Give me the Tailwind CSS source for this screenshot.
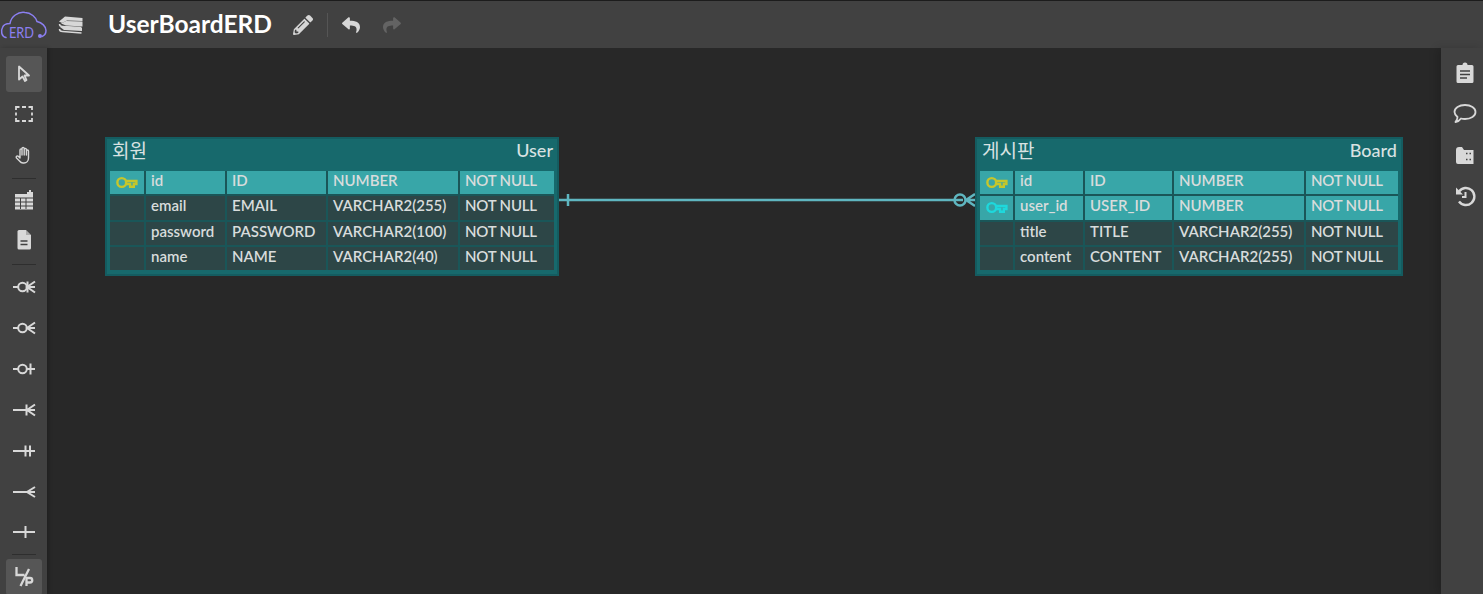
<!DOCTYPE html>
<html lang="en">
<head>
    <meta charset="UTF-8">
    <title>UserBoardERD</title>
    <script src="https://cdn.jsdelivr.net/npm/@tailwindcss/browser@4"></script>
</head>
<body class="h-[594px] w-[1483px] overflow-hidden bg-[#282828] font-['Lato','Noto_Sans_CJK_KR',sans-serif] text-[#d8dcdc]">

    <!-- Top bar -->
    <header class="flex h-[48px] items-center border-t border-[#1c1c1c] bg-[#414141]">
        <svg class="h-[32px] w-[48px]" viewBox="0 0 48 32" fill="none" stroke="#8b7ff0" stroke-width="1.500" stroke-linecap="round">
            <path d="M6 28.500C1.500 27.500 .5 22 2.500 18.500 3.500 15.500 7 14.500 10 14.500 11 7.500 18 2.500 25 3.500 31 3.500 36 8.500 37 12.500 42 13.500 46 17.500 46 21.500 46 24.500 44.500 26.500 42 27.500"/>
            <circle cx="40" cy="27" r="2" fill="#8b7ff0" stroke="none"/>
            <text x="9" y="28.500" font-family="Lato" font-size="15" fill="#8b7ff0" stroke="none" textLength="25" lengthAdjust="spacingAndGlyphs">ERD</text>
        </svg>
        <svg class="ml-[10px] h-[22px] w-[26px]" viewBox="0 0 26 20" fill="none" stroke="#d8d8d8" stroke-width="1.500">
            <path fill="#d8d8d8" stroke="none" d="M1 6.500 7 1.500l17.500 1.500v3L9 5.500 4 8z"/>
            <path d="M1.500 9c0 1.500 1.500 2.500 3 2.500l19 1"/>
            <path fill="#d8d8d8" stroke="none" d="M3 8.500 8 6l16.500.5v5L8 10.500z"/>
            <path d="M1.500 14c0 1.500 1.500 2.500 3 2.500l19 1.500"/>
            <path fill="#d8d8d8" stroke="none" d="M2 12l3-1 19 2v3L6 15z"/>
        </svg>
        <h1 class="ml-[24px] w-[164px] text-[24.500px] font-bold leading-none text-white">UserBoardERD</h1>
        <svg class="ml-[21px] h-[20px] w-[20px]" viewBox="0 0 512 512" fill="#d6d6d6"><path d="M497.900 142.100l-46.100 46.100c-4.700 4.700-12.300 4.700-17 0l-111-111c-4.700-4.700-4.700-12.300 0-17l46.100-46.100c18.700-18.700 49.100-18.700 67.900 0l60.100 60.100c18.800 18.700 18.800 49.100 0 67.900zM284.200 99.800L21.600 362.400.4 483.900c-2.900 16.400 11.400 30.600 27.800 27.800l121.500-21.300 262.600-262.600c4.700-4.700 4.700-12.300 0-17l-111-111c-4.800-4.700-12.400-4.700-17.100 0zM124.100 339.900c-5.500-5.500-5.500-14.300 0-19.800l154-154c5.500-5.500 14.300-5.500 19.800 0s5.500 14.300 0 19.800l-154 154c-5.500 5.500-14.300 5.500-19.800 0zM88 424h48v36.300l-64.500 11.300-31.100-31.100L51.700 376H88v48z"/></svg>
        <div class="ml-[14px] h-[24px] w-px bg-[#555555]"></div>
        <svg class="ml-[14px] h-[20px] w-[18px]" viewBox="0 0 512 512" fill="#d6d6d6"><path d="M8.309 189.836L184.313 37.851C199.719 24.546 224 35.347 224 56.015v80.053c160.629 1.839 288 34.032 288 186.258 0 61.441-39.581 122.309-83.333 154.132-13.653 9.931-33.111-2.533-28.077-18.631 45.344-145.012-21.507-183.510-176.590-185.742V360c0 20.700-24.300 31.453-39.687 18.164l-176.004-152c-11.071-9.562-11.086-26.753 0-36.328z"/></svg>
        <svg class="ml-[23px] h-[20px] w-[18px] -scale-x-100" viewBox="0 0 512 512" fill="#636363"><path d="M8.309 189.836L184.313 37.851C199.719 24.546 224 35.347 224 56.015v80.053c160.629 1.839 288 34.032 288 186.258 0 61.441-39.581 122.309-83.333 154.132-13.653 9.931-33.111-2.533-28.077-18.631 45.344-145.012-21.507-183.510-176.590-185.742V360c0 20.700-24.300 31.453-39.687 18.164l-176.004-152c-11.071-9.562-11.086-26.753 0-36.328z"/></svg>
    </header>

    <div class="relative flex h-[546px]">
        <!-- Left tools -->
        <aside class="relative z-10 flex w-[47px] flex-col items-center bg-[#414141] pt-[8px] shadow-[2px_0_4px_rgba(0,0,0,0.2)] [&>*]:shrink-0">
            <div class="flex h-[36px] w-[36px] items-center justify-center rounded-[3px] bg-[#565656]">
                <svg class="h-[20px] w-[20px]" viewBox="0 0 20 20" fill="none" stroke="#d8d8d8" stroke-width="1.800" stroke-linejoin="round"><path d="M5 2.500v13l3.500-3 2.500 4.500 1.500-1-2-4.500h4.500z"/></svg>
            </div>
            <div class="mt-[4px] flex h-[36px] items-center justify-center">
                <svg class="h-[18px] w-[18px]" viewBox="0 0 18 18" fill="none" stroke="#d8d8d8" stroke-width="1.800"><path d="M1 5V2h3.500M7 2h4M13.500 2H17v3M17 7.500v3M17 13v3h-3.500M11 16H7M4.500 16H1v-3M1 10.500v-3"/></svg>
            </div>
            <div class="mt-[5px] flex h-[36px] items-center justify-center">
                <svg class="h-[20px] w-[20px]" viewBox="0 0 20 20" fill="none" stroke="#d8d8d8" stroke-width="1.400" stroke-linejoin="round" stroke-linecap="round"><path d="M6 13V5c0-1.500 2-1.500 2 0V3.500c0-1.500 2.200-1.500 2.200 0V4.500c0-1.500 2.200-1.500 2.200 0V6c0-1.400 2.100-1.400 2.100 0v7c0 3-2 5-4.500 5H9c-1.500 0-2.500-.7-3.500-2l-3-3c-1-1.200.5-2.700 1.800-1.700L6 13M8 5v5M10.200 4.500V10M12.400 6v4"/></svg>
            </div>
            <div class="mt-[5px] h-px w-[24px] bg-[#2e2e2e]"></div>
            <div class="mt-[2px] flex h-[38px] items-center justify-center">
                <svg class="h-[22px] w-[22px]" viewBox="0 0 22 22" fill="#d8d8d8"><path d="M2 5h12V3h2V1h2v2h2v2h-2v15.500H2z"/><path d="M18 5h2v15.500h-2z"/><path stroke="#414141" stroke-width="1" fill="none" d="M2 9h18M2 13h18M2 17h18M7.500 9v11M13 9v11"/></svg>
            </div>
            <div class="mt-[2px] flex h-[38px] items-center justify-center">
                <svg class="h-[22px] w-[22px]" viewBox="0 0 22 22"><path fill="#d8d8d8" d="M4.500 2.500a1.500 1.500 0 0 1 1.500-1.500h7l5 5v13a1.500 1.500 0 0 1-1.500 1.500h-10.500a1.500 1.500 0 0 1-1.500-1.500z"/><path stroke="#414141" stroke-width="1.500" d="M7.500 12h7M7.500 15.500h7"/><path fill="#414141" d="M13 1v5h5z" opacity=".3"/></svg>
            </div>
            <div class="mt-[5px] h-px w-[24px] bg-[#2e2e2e]"></div>

            <!-- Relationship tools -->
            <div class="mt-[3px] flex h-[38px] items-center justify-center">
                <svg class="h-[14px] w-[24px]" viewBox="0 0 24 14" fill="none" stroke="#d8d8d8" stroke-width="2"><path d="M1 7h5M15 7h8M23 1.500 15 7l8 5.500"/><circle cx="10.500" cy="7" r="4.300"/><path d="M15.500 1.500v11"/></svg>
            </div>
            <div class="mt-[3px] flex h-[38px] items-center justify-center">
                <svg class="h-[14px] w-[24px]" viewBox="0 0 24 14" fill="none" stroke="#d8d8d8" stroke-width="2"><path d="M1 7h5M15 7h8M23 1.500 15 7l8 5.500"/><circle cx="10.500" cy="7" r="4.300"/></svg>
            </div>
            <div class="mt-[3px] flex h-[38px] items-center justify-center">
                <svg class="h-[14px] w-[24px]" viewBox="0 0 24 14" fill="none" stroke="#d8d8d8" stroke-width="2"><path d="M1 7h5M15 7h8M18.500 1.500v11"/><circle cx="10.500" cy="7" r="4.300"/></svg>
            </div>
            <div class="mt-[3px] flex h-[38px] items-center justify-center">
                <svg class="h-[14px] w-[24px]" viewBox="0 0 24 14" fill="none" stroke="#d8d8d8" stroke-width="2"><path d="M1 7h22M23 1.500 15 7l8 5.500M14.500 1.500v11"/></svg>
            </div>
            <div class="mt-[3px] flex h-[38px] items-center justify-center">
                <svg class="h-[14px] w-[24px]" viewBox="0 0 24 14" fill="none" stroke="#d8d8d8" stroke-width="2"><path d="M1 7h22M13.500 1.500v11M18 1.500v11"/></svg>
            </div>
            <div class="mt-[3px] flex h-[38px] items-center justify-center">
                <svg class="h-[14px] w-[24px]" viewBox="0 0 24 14" fill="none" stroke="#d8d8d8" stroke-width="2"><path d="M1 7h22M23 2 15 7l8 5"/></svg>
            </div>
            <div class="mt-[2px] flex h-[38px] items-center justify-center">
                <svg class="h-[14px] w-[24px]" viewBox="0 0 24 14" fill="none" stroke="#d8d8d8" stroke-width="2"><path d="M1 7h22M13.500 1v12"/></svg>
            </div>
            <div class="mt-[3px] h-px w-[24px] bg-[#2e2e2e]"></div>
            <div class="mt-[4px] flex h-[36px] w-[36px] items-center justify-center rounded-[3px] bg-[#565656]">
                <svg class="h-[22px] w-[22px]" viewBox="0 0 22 22" fill="none" stroke="#d8d8d8" stroke-width="2.300"><path d="M3.500 1v8h8M16 3 7.500 20"/><path d="M13.500 20v-8h3.500a2 2 0 0 1 0 4.500h-3.500"/></svg>
            </div>
        </aside>

        <!-- Canvas -->
        <main class="relative flex-1 bg-[#282828]">
            <!-- User table -->
            <section class="absolute left-[58px] top-[89px] h-[139px] w-[454px] border-2 border-[#145c60] bg-[#17696c]">
                <div class="flex h-[22px] items-center justify-between pl-[5px] pr-[4px] text-[18px] leading-none text-[#d8e2e2]">
                    <span class="text-[19px]">회원</span><span class="font-medium">User</span>
                </div>
                <div class="mx-[3px] mt-[10px] grid grid-cols-[34px_79px_99px_130px_94px] grid-rows-[23.300px_23.300px_23.300px_23.300px] gap-[2px] bg-[#1a5658] text-[15px] font-semibold leading-[18px]">
                    <div class="flex items-center justify-center bg-[#38a6a8]"><svg class="h-[13px] w-[22px]" viewBox="0 0 21 12" fill="none" stroke="#c6c62c" stroke-width="2.300"><circle cx="5.500" cy="6" r="4.200"/><path d="M9.500 4.500H19.500V7.500H17V10H13.500V7.500H9.500"/></svg></div>
                    <div class="bg-[#38a6a8] pl-[5px]">id</div><div class="bg-[#38a6a8] pl-[5px]">ID</div><div class="bg-[#38a6a8] pl-[5px]">NUMBER</div><div class="bg-[#38a6a8] pl-[5px] tracking-[-0.2px]">NOT NULL</div>
                    <div class="bg-[#2d4647]"></div><div class="bg-[#2d4647] pl-[5px]">email</div><div class="bg-[#2d4647] pl-[5px]">EMAIL</div><div class="bg-[#2d4647] pl-[5px]">VARCHAR2(255)</div><div class="bg-[#2d4647] pl-[5px] tracking-[-0.2px]">NOT NULL</div>
                    <div class="bg-[#2d4647]"></div><div class="bg-[#2d4647] pl-[5px]">password</div><div class="bg-[#2d4647] pl-[5px]">PASSWORD</div><div class="bg-[#2d4647] pl-[5px]">VARCHAR2(100)</div><div class="bg-[#2d4647] pl-[5px] tracking-[-0.2px]">NOT NULL</div>
                    <div class="bg-[#2d4647]"></div><div class="bg-[#2d4647] pl-[5px]">name</div><div class="bg-[#2d4647] pl-[5px]">NAME</div><div class="bg-[#2d4647] pl-[5px]">VARCHAR2(40)</div><div class="bg-[#2d4647] pl-[5px] tracking-[-0.2px]">NOT NULL</div>
                </div>
            </section>

            <!-- Relationship line -->
            <svg class="absolute left-[512px] top-[140px] h-[24px] w-[416px]" viewBox="0 0 416 24" fill="none" stroke="#5fb6c0" stroke-width="2.500">
                <path d="M0 12h404"/>
                <path d="M9 6v12" />
                <circle cx="401" cy="12" r="5.500"/>
                <path d="M407 12l9-6M407 12l9 6M407 12h9"/>
            </svg>

            <!-- Board table -->
            <section class="absolute left-[928px] top-[89px] h-[139px] w-[428px] border-2 border-[#145c60] bg-[#17696c]">
                <div class="flex h-[22px] items-center justify-between pl-[5px] pr-[4px] text-[18px] leading-none text-[#d8e2e2]">
                    <span class="text-[19px]">게시판</span><span class="font-medium">Board</span>
                </div>
                <div class="mx-[3px] mt-[10px] grid grid-cols-[33px_68px_87px_130px_92px] grid-rows-[23.300px_23.300px_23.300px_23.300px] gap-[2px] bg-[#1a5658] text-[15px] font-semibold leading-[18px]">
                    <div class="flex items-center justify-center bg-[#38a6a8]"><svg class="h-[13px] w-[22px]" viewBox="0 0 21 12" fill="none" stroke="#c6c62c" stroke-width="2.300"><circle cx="5.500" cy="6" r="4.200"/><path d="M9.500 4.500H19.500V7.500H17V10H13.500V7.500H9.500"/></svg></div>
                    <div class="bg-[#38a6a8] pl-[5px]">id</div><div class="bg-[#38a6a8] pl-[5px]">ID</div><div class="bg-[#38a6a8] pl-[5px]">NUMBER</div><div class="bg-[#38a6a8] pl-[5px] tracking-[-0.2px]">NOT NULL</div>
                    <div class="flex items-center justify-center bg-[#38a6a8]"><svg class="h-[13px] w-[22px]" viewBox="0 0 21 12" fill="none" stroke="#1ed8dc" stroke-width="2.300"><circle cx="5.500" cy="6" r="4.200"/><path d="M9.500 4.500H19.500V7.500H17V10H13.500V7.500H9.500"/></svg></div>
                    <div class="bg-[#38a6a8] pl-[5px]">user_id</div><div class="bg-[#38a6a8] pl-[5px]">USER_ID</div><div class="bg-[#38a6a8] pl-[5px]">NUMBER</div><div class="bg-[#38a6a8] pl-[5px] tracking-[-0.2px]">NOT NULL</div>
                    <div class="bg-[#2d4647]"></div><div class="bg-[#2d4647] pl-[5px]">title</div><div class="bg-[#2d4647] pl-[5px]">TITLE</div><div class="bg-[#2d4647] pl-[5px]">VARCHAR2(255)</div><div class="bg-[#2d4647] pl-[5px] tracking-[-0.2px]">NOT NULL</div>
                    <div class="bg-[#2d4647]"></div><div class="bg-[#2d4647] pl-[5px]">content</div><div class="bg-[#2d4647] pl-[5px]">CONTENT</div><div class="bg-[#2d4647] pl-[5px]">VARCHAR2(255)</div><div class="bg-[#2d4647] pl-[5px] tracking-[-0.2px]">NOT NULL</div>
                </div>
            </section>
        </main>

        <!-- Right tools -->
        <aside class="relative z-10 flex w-[42px] flex-col items-center gap-[19px] bg-[#414141] pl-[6px] pt-[14px] shadow-[-4px_0_8px_rgba(0,0,0,0.15)]">
            <svg class="h-[22px] w-[22px]" viewBox="0 0 22 22"><path fill="#d8d8d8" d="M4 3h4.500a2.500 2.500 0 0 1 5 0H18a1.500 1.500 0 0 1 1.500 1.500v15A1.500 1.500 0 0 1 18 21H4a1.500 1.500 0 0 1-1.500-1.500v-15A1.500 1.500 0 0 1 4 3z"/><path stroke="#414141" stroke-width="1.600" d="M6 9h10M6 12.500h10M6 16h7"/></svg>
            <svg class="h-[22px] w-[24px]" viewBox="0 0 24 22" fill="none" stroke="#d8d8d8" stroke-width="1.800" stroke-linejoin="round"><path d="M12 2c6 0 10.500 3 10.500 7s-4.500 7-10.500 7c-1.500 0-3-.2-4-.5-1 1.500-3 3-5.500 3.500 1-1.500 2-2.500 2-5C2.800 12.500 1.500 11 1.500 9 1.500 5 6 2 12 2z"/></svg>
            <svg class="h-[22px] w-[22px]" viewBox="0 0 22 22"><path fill="#d8d8d8" d="M2 6a3 3 0 0 1 3-3h3l2 3h9.500v14H4a2 2 0 0 1-2-2z"/><path stroke="#414141" stroke-width="1.500" stroke-dasharray="1.500 2" d="M12 9.500h7M12 15.500h7"/></svg>
            <svg class="h-[22px] w-[22px]" viewBox="0 0 22 22" fill="none" stroke="#d8d8d8" stroke-width="2.400"><path d="M5 6.500A8.500 8.500 0 1 1 5 16.500"/><path fill="#d8d8d8" stroke="none" d="M2 2.500l7 7H2z"/><path stroke-width="2" d="M11.500 7v5H8"/></svg>
        </aside>
    </div>

</body>
</html>
